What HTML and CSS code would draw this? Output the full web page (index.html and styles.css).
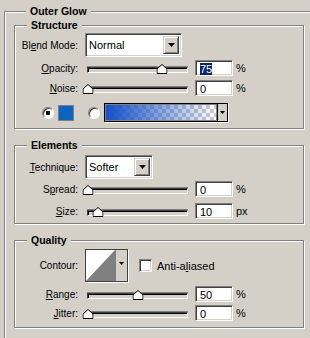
FILE: index.html
```html
<!DOCTYPE html>
<html lang="en">

<head>
    <meta charset="UTF-8">
    <meta name="viewport" content="width=device-width, initial-scale=1.0">
    <title>Outer Glow</title>
    <link rel="stylesheet" href="styles.css">
</head>

<body>
    <fieldset class="group outer">
        <legend>Outer Glow</legend>

        <fieldset class="group structure">
            <legend>Structure</legend>

            <div class="row row-combo">
                <span class="lbl">Bl<u>e</u>nd Mode:</span>
                <div class="combo combo-blend">
                    <span class="combo-text">Normal</span>
                    <span class="combo-btn">
                        <svg width="7" height="4" viewBox="0 0 7 4"><path d="M0 0H7L3.5 4Z" fill="#000"/></svg>
                    </span>
                </div>
            </div>

            <div class="row row-opacity">
                <span class="lbl"><u>O</u>pacity:</span>
                <div class="slider">
                    <svg class="thumb" style="left: 75%" width="11" height="10" viewBox="0 0 11 10"><path d="M5.5 .5L10.5 5V9.5H.5V5Z" fill="#fff" stroke="#000"/></svg>
                </div>
                <div class="field"><span class="selected">75</span></div>
                <span class="unit">%</span>
            </div>

            <div class="row row-noise">
                <span class="lbl"><u>N</u>oise:</span>
                <div class="slider">
                    <svg class="thumb" style="left: 0%" width="11" height="10" viewBox="0 0 11 10"><path d="M5.5 .5L10.5 5V9.5H.5V5Z" fill="#fff" stroke="#000"/></svg>
                </div>
                <div class="field">0</div>
                <span class="unit">%</span>
            </div>

            <div class="row row-color">
                <span class="radio checked"></span>
                <span class="swatch"></span>
                <span class="radio"></span>
                <div class="gradient">
                    <span class="gradient-fill"></span>
                    <span class="gradient-btn">
                        <svg width="5" height="3" viewBox="0 0 5 3"><path d="M0 0H5L2.5 3Z" fill="#000"/></svg>
                    </span>
                </div>
            </div>
        </fieldset>

        <fieldset class="group elements">
            <legend>Elements</legend>

            <div class="row row-combo">
                <span class="lbl"><u>T</u>echnique:</span>
                <div class="combo combo-technique">
                    <span class="combo-text">Softer</span>
                    <span class="combo-btn">
                        <svg width="7" height="4" viewBox="0 0 7 4"><path d="M0 0H7L3.5 4Z" fill="#000"/></svg>
                    </span>
                </div>
            </div>

            <div class="row row-spread">
                <span class="lbl">S<u>p</u>read:</span>
                <div class="slider">
                    <svg class="thumb" style="left: 0%" width="11" height="10" viewBox="0 0 11 10"><path d="M5.5 .5L10.5 5V9.5H.5V5Z" fill="#fff" stroke="#000"/></svg>
                </div>
                <div class="field">0</div>
                <span class="unit">%</span>
            </div>

            <div class="row row-size">
                <span class="lbl"><u>S</u>ize:</span>
                <div class="slider">
                    <svg class="thumb" style="left: 10%" width="11" height="10" viewBox="0 0 11 10"><path d="M5.5 .5L10.5 5V9.5H.5V5Z" fill="#fff" stroke="#000"/></svg>
                </div>
                <div class="field">10</div>
                <span class="unit">px</span>
            </div>
        </fieldset>

        <fieldset class="group quality">
            <legend>Quality</legend>

            <div class="row row-contour">
                <span class="lbl">Contour:</span>
                <div class="contour">
                    <svg class="contour-curve" width="29" height="31" viewBox="0 0 29 31"><rect width="29" height="31" fill="#fff"/><path d="M0 31L29 0V31Z" fill="#808080"/></svg>
                    <span class="contour-btn">
                        <svg width="5" height="3" viewBox="0 0 5 3"><path d="M0 0H5L2.5 3Z" fill="#000"/></svg>
                    </span>
                </div>
                <span class="checkbox"></span>
                <span class="check-label">Anti-a<u>l</u>iased</span>
            </div>

            <div class="row row-range">
                <span class="lbl"><u>R</u>ange:</span>
                <div class="slider">
                    <svg class="thumb" style="left: 50%" width="11" height="10" viewBox="0 0 11 10"><path d="M5.5 .5L10.5 5V9.5H.5V5Z" fill="#fff" stroke="#000"/></svg>
                </div>
                <div class="field">50</div>
                <span class="unit">%</span>
            </div>

            <div class="row row-jitter">
                <span class="lbl"><u>J</u>itter:</span>
                <div class="slider">
                    <svg class="thumb" style="left: 0%" width="11" height="10" viewBox="0 0 11 10"><path d="M5.5 .5L10.5 5V9.5H.5V5Z" fill="#fff" stroke="#000"/></svg>
                </div>
                <div class="field">0</div>
                <span class="unit">%</span>
            </div>
        </fieldset>
    </fieldset>
</body>

</html>
```

FILE: styles.css
```css
* {
    box-sizing: border-box;
}

body {
    margin: 0;
    width: 310px;
    height: 338px;
    overflow: hidden;
    background-color: #d4d0c8;
    color: #000;
    font-family: "Liberation Sans", Arial, sans-serif;
    font-size: 10px;
}

/* etched group boxes */
.group {
    margin: 0;
    padding: 0;
    min-width: 0;
    border: 1px solid #808080;
    box-shadow: inset 1px 1px 0 #fff, 1px 1px 0 #fff;
}

.group > legend {
    margin-left: 12px;
    padding: 0 4px;
    font-size: 10.5px;
    font-weight: bold;
    line-height: 12px;
    background-color: #d4d0c8;
}

/* the outer box runs on past the window, so no right or bottom edge */
.outer {
    margin: 5px 0 0 4px;
    width: 306px;
    height: 333px;
    padding: 2px 0 0 9px;
    border-right: 0;
    border-bottom: 0;
    box-shadow: inset 1px 1px 0 #fff;
}

.structure,
.elements,
.quality {
    width: 290px;
}

.structure {
    padding: 2px 0 6px;
}

.elements {
    margin-top: 10px;
    padding: 4px 0 4px;
}

.quality {
    margin-top: 10px;
    padding: 3px 0 6px;
}

/* rows */
.row {
    display: flex;
    align-items: center;
    height: 16px;
}

.row-combo {
    height: 24px;
}

.row-opacity { margin-top: 3px; }
.row-noise { margin-top: 4px; }
.row-color { margin-top: 7px; height: 19px; }
.row-spread { margin-top: 2px; }
.row-size { margin-top: 6px; }
.row-contour { height: 33px; }
.row-range { margin-top: 4px; }
.row-jitter { margin-top: 3px; }

.lbl {
    flex: none;
    width: 63px;
    text-align: right;
    white-space: nowrap;
}

/* combo boxes */
.combo {
    display: flex;
    height: 24px;
    margin-left: 7px;
    padding: 2px;
    border: 1px solid;
    border-color: #808080 #fff #fff #808080;
    box-shadow: inset 1px 1px 0 #404040, inset -1px -1px 0 #d4d0c8;
    background-color: #fff;
}

.combo-blend { width: 97px; }
.combo-technique { width: 68px; }

.combo-text {
    flex: 1;
    padding-left: 1px;
    line-height: 18px;
    font-size: 11px;
}

.combo-btn {
    display: flex;
    align-items: center;
    justify-content: center;
    width: 16px;
    border: 1px solid;
    border-color: #d4d0c8 #404040 #404040 #d4d0c8;
    box-shadow: inset 1px 1px 0 #fff, inset -1px -1px 0 #808080;
    background-color: #d4d0c8;
}

/* sliders */
.slider {
    position: relative;
    flex: none;
    width: 101px;
    height: 6px;
    margin: 4px 0 0 9px;
    border: 1px solid;
    border-color: #404040 #fff #fff #404040;
    box-shadow: inset 1px 1px 0 #000, 0 -1px 0 #808080;
    background-color: #d4d0c8;
}

.thumb {
    position: absolute;
    bottom: -2px;
    transform: translateX(-50%);
}

/* text fields */
.field {
    flex: none;
    width: 38px;
    height: 16px;
    margin-left: 7px;
    padding: 2px 0 0 4px;
    border: 1px solid;
    border-color: #808080 #fff #fff #808080;
    box-shadow: inset 1px 1px 0 #404040, inset -1px -1px 0 #d4d0c8;
    background-color: #fff;
    font-size: 11px;
    line-height: 12px;
}

.selected {
    background-color: #0a246a;
    color: #fff;
}

.unit {
    margin-left: 3px;
    font-size: 11px;
}

/* colour row */
.radio {
    flex: none;
    width: 12px;
    height: 12px;
    border-radius: 50%;
    border: 1px solid;
    border-color: #808080 #fff #fff #808080;
    box-shadow: inset 1px 1px 0 #404040;
    background-color: #fff;
}

.radio.checked {
    background: radial-gradient(circle, #000 0, #000 2px, #fff 2.5px);
}

.row-color .radio:first-child {
    margin-left: 27px;
}

.swatch {
    width: 16px;
    height: 16px;
    margin: 0 14px 0 4px;
    border: 1px solid #808080;
    background-color: #0a64c4;
}

.gradient {
    display: flex;
    width: 124px;
    height: 19px;
    margin-left: 4px;
    border: 1px solid #000;
    box-shadow: 1px 1px 0 #fff;
}

.gradient-fill {
    flex: 1;
    border: 1px solid #808080;
    background:
        linear-gradient(to right, rgba(20, 80, 200, 1), rgba(20, 80, 200, 0)),
        repeating-conic-gradient(#ccc 0 25%, #fff 0 50%) 0 0 / 8px 8px;
}

.gradient-btn {
    display: flex;
    align-items: center;
    justify-content: center;
    width: 10px;
    border-left: 1px solid #000;
    background-color: #d4d0c8;
}

/* contour */
.contour {
    display: flex;
    width: 43px;
    height: 33px;
    margin-left: 7px;
    border: 1px solid #404040;
    box-shadow: 1px 1px 0 #fff;
}

.contour-curve {
    display: block;
}

.contour-btn {
    display: flex;
    justify-content: center;
    padding-top: 12px;
    flex: 1;
    border-left: 1px solid #808080;
    background-color: #d4d0c8;
}

.checkbox {
    width: 13px;
    height: 13px;
    margin: 0 5px 0 11px;
    border: 1px solid;
    border-color: #808080 #fff #fff #808080;
    box-shadow: inset 1px 1px 0 #404040, inset -1px -1px 0 #d4d0c8;
    background-color: #fff;
}

.check-label {
    font-size: 11px;
}
```
